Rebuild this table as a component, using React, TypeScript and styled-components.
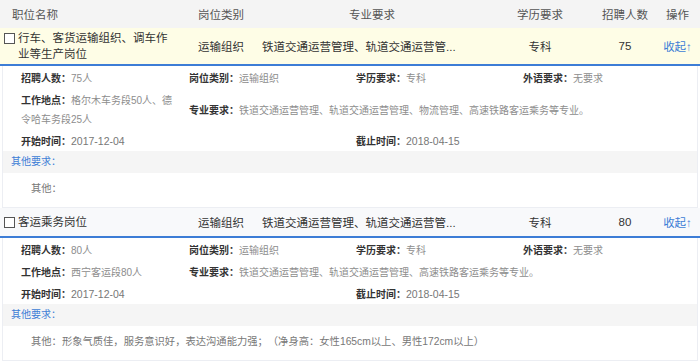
import React, { FC } from "react";
import styled, { createGlobalStyle } from "styled-components";

const GlobalStyle = createGlobalStyle`
  body {
    margin: 0;
    background: #fff;
    font-family: "Liberation Sans", "Noto Sans CJK SC", sans-serif;
    text-spacing-trim: space-all;
  }
`;

interface Job {
  name: string;
  category: string;
  major: string;
  education: string;
  count: number;
  place: string;
  majorFull: string;
  language: string;
  start: string;
  end: string;
  other: string;
  tone: "yellow" | "white";
}

const jobs: Job[] = [
  {
    name: "行车、客货运输组织、调车作业等生产岗位",
    category: "运输组织",
    major: "铁道交通运营管理、轨道交通运营管理",
    education: "专科",
    count: 75,
    place: "格尔木车务段50人、德令哈车务段25人",
    majorFull: "铁道交通运营管理、轨道交通运营管理、物流管理、高速铁路客运乘务等专业。",
    language: "无要求",
    start: "2017-12-04",
    end: "2018-04-15",
    other: "",
    tone: "yellow",
  },
  {
    name: "客运乘务岗位",
    category: "运输组织",
    major: "铁道交通运营管理、轨道交通运营管理",
    education: "专科",
    count: 80,
    place: "西宁客运段80人",
    majorFull: "铁道交通运营管理、轨道交通运营管理、高速铁路客运乘务等专业。",
    language: "无要求",
    start: "2017-12-04",
    end: "2018-04-15",
    other: "形象气质佳，服务意识好，表达沟通能力强；（净身高：女性165cm以上、男性172cm以上）",
    tone: "white",
  },
];

// the list shows only the first 16 characters of the major
const shorten = (text: string, max = 16) =>
  text.length > max ? `${text.slice(0, max)}...` : text;

const JobDetail: FC<{ job: Job }> = ({ job }) => (
  <Panel>
    <InfoGrid>
      <Info>
        <Label>招聘人数：</Label>
        <Value>{job.count}人</Value>
      </Info>
      <Info>
        <Label>岗位类别：</Label>
        <Value>{job.category}</Value>
      </Info>
      <Info>
        <Label>学历要求：</Label>
        <Value>{job.education}</Value>
      </Info>
      <Info>
        <Label>外语要求：</Label>
        <Value>{job.language}</Value>
      </Info>
      <Info>
        <Label>工作地点：</Label>
        <Value>{job.place}</Value>
      </Info>
      <Info $span={3}>
        <Label>专业要求：</Label>
        <Value>{job.majorFull}</Value>
      </Info>
      <Info $span={2}>
        <Label>开始时间：</Label>
        <DateValue>{job.start}</DateValue>
      </Info>
      <Info $span={2}>
        <Label>截止时间：</Label>
        <DateValue>{job.end}</DateValue>
      </Info>
    </InfoGrid>
    <OtherBar>其他要求：</OtherBar>
    <OtherText>其他：{job.other}</OtherText>
  </Panel>
);

export default function App() {
  return (
    <>
      <GlobalStyle />
      <Table>
        <HeadRow>
          <HeadCell $left>职位名称</HeadCell>
          <HeadCell>岗位类别</HeadCell>
          <HeadCell>专业要求</HeadCell>
          <HeadCell>学历要求</HeadCell>
          <HeadCell>招聘人数</HeadCell>
          <HeadCell>操作</HeadCell>
        </HeadRow>
        {jobs.map((job) => (
          <React.Fragment key={job.name}>
            <JobRow $tone={job.tone}>
              <NameCell>
                <Check />
                <span>{job.name}</span>
              </NameCell>
              <Cell>{job.category}</Cell>
              <MajorCell title={job.major}>{shorten(job.major)}</MajorCell>
              <Cell>{job.education}</Cell>
              <Cell>{job.count}</Cell>
              <Cell>
                <Toggle>收起↑</Toggle>
              </Cell>
            </JobRow>
            <JobDetail job={job} />
          </React.Fragment>
        ))}
      </Table>
    </>
  );
}

const columns = "183px 76px 226px 110px 60px 45px";

const Table = styled.div`
  width: 700px;
`;

const HeadRow = styled.div`
  display: grid;
  grid-template-columns: ${columns};
  height: 28px;
  align-items: center;
  background: #f4f4f4;
`;

const HeadCell = styled.div<{ $left?: boolean }>`
  font-size: 11.5px;
  color: #555;
  text-align: ${({ $left }) => ($left ? "left" : "center")};
  padding-left: ${({ $left }) => ($left ? "12px" : "0")};
`;

const JobRow = styled.div<{ $tone: "yellow" | "white" }>`
  display: grid;
  grid-template-columns: ${columns};
  align-items: center;
  min-height: 28px;
  background: ${({ $tone }) => ($tone === "yellow" ? "#fefde6" : "#f8f9fb")};
  border-bottom: 2px solid #3d7dd6;
  font-size: 11.5px;
  color: #333;
`;

const Cell = styled.div`
  text-align: center;
`;

const NameCell = styled.div`
  display: flex;
  align-items: flex-start;
  padding: 2px 8px 2px 4px;
  line-height: 16px;
`;

const Check = styled.span`
  flex: none;
  width: 9px;
  height: 9px;
  margin: 3px 3px 0 0;
  border: 1px solid #555;
  background: #fff;
`;

const MajorCell = styled.div`
  padding-left: 3px;
  white-space: nowrap;
  overflow: hidden;
`;

const Toggle = styled.span`
  color: #3d7dd6;
`;

const Panel = styled.div`
  margin: 0 2px;
  border: 1px solid #eceef3;
  border-top: none;
`;

const InfoGrid = styled.div`
  display: grid;
  grid-template-columns: 168px 167px 167px 1fr;
  align-items: center;
  row-gap: 2px;
  padding: 2px 0 0 18px;
`;

const Info = styled.div<{ $span?: number }>`
  grid-column: span ${({ $span }) => $span ?? 1};
  font-size: 10px;
  line-height: 19px;
  padding-right: 13px;
`;

const Label = styled.span`
  font-family: "Noto Sans CJK SC", sans-serif;
  font-weight: bold;
  color: #333;
`;

const Value = styled.span`
  color: #8d8d8d;
`;

const DateValue = styled.span`
  color: #777;
  font-size: 10.5px;
`;

const OtherBar = styled.div`
  height: 22px;
  line-height: 22px;
  padding-left: 8px;
  background: #f5f5f5;
  color: #3d7dd6;
  font-size: 10px;
`;

const OtherText = styled.div`
  padding: 7px 0 9px 28px;
  line-height: 18px;
  font-size: 10.3px;
  color: #777;
`;
